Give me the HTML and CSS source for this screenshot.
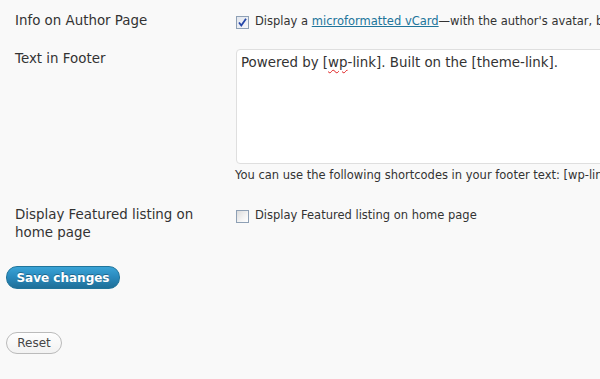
FILE: index.html
```html
<!DOCTYPE html>
<html>
<head>
<meta charset="utf-8">
<link rel="stylesheet" href="styles.css">
</head>
<body>
<form class="settings">
  <div class="row row-author">
    <div class="label">Info on Author Page</div>
    <div class="field">
      <label class="check"><span class="box checked"><svg viewBox="0 0 13 13" width="13" height="13"><path d="M3 6.5 L5.3 9.5 L10 2.8" fill="none" stroke="#2446a8" stroke-width="1.8"/></svg></span><span class="check-text">Display a <a href="#">microformatted vCard</a>—with the author's avatar, bio and other details—on the author page.</span></label>
    </div>
  </div>
  <div class="row row-footer">
    <div class="label">Text in Footer</div>
    <div class="field">
      <div class="textarea">Powered by [<span class="spell">wp</span>-link]. Built on the [theme-link].</div>
      <p class="desc">You can use the following shortcodes in your footer text: [wp-link] [theme-link] [loginout-link] [blog-title] [blog-link] [the-year]</p>
    </div>
  </div>
  <div class="row row-featured">
    <div class="label">Display Featured listing on home page</div>
    <div class="field">
      <label class="check"><span class="box"></span><span class="check-text">Display Featured listing on home page</span></label>
    </div>
  </div>
  <div class="actions">
    <button type="button" class="btn-primary">Save changes</button>
  </div>
  <div class="reset-area">
    <button type="button" class="btn-secondary">Reset</button>
  </div>
</form>
</body>
</html>
```
FILE: styles.css
```css
html, body {
  margin: 0;
  padding: 0;
  background: #f9f9f9;
  overflow: hidden;
}
body {
  font-family: "DejaVu Sans", Verdana, sans-serif;
  color: #333;
  width: 600px;
  height: 379px;
}
.settings {
  width: 900px;
}
.row {
  display: grid;
  grid-template-columns: 235px 1fr;
}
.label {
  padding-left: 15px;
  font-size: 13.4px;
  line-height: 18px;
  width: 190px;
}
.row-author {
  padding-top: 12px;
}
.row-footer {
  padding-top: 19px;
}
.row-footer .label {
  padding-top: 1px;
}
.row-featured {
  padding-top: 23px;
}
.check {
  display: flex;
  align-items: flex-start;
  font-size: 11.5px;
  line-height: 18px;
  white-space: nowrap;
}
.box {
  box-sizing: border-box;
  width: 13px;
  height: 13px;
  margin: 4px 6px 0 1px;
  border: 1px solid #8ea0b5;
  background: linear-gradient(135deg, #dcdcdc 0%, #f4f4f4 60%, #ffffff 100%);
  position: relative;
  flex: none;
}
.box svg {
  position: absolute;
  left: -1px;
  top: -1px;
}
.box.checked {
  background: linear-gradient(135deg, #e2e6ee 0%, #f5f6f8 100%);
}
.check-text a {
  color: #21759b;
  text-decoration: underline;
}
.textarea {
  box-sizing: border-box;
  margin-left: 1px;
  width: 500px;
  height: 115px;
  background: #fff;
  border: 1px solid #dfdfdf;
  border-radius: 4px;
  padding: 4px 4px;
  font-size: 13.4px;
  line-height: 18px;
  white-space: nowrap;
}
.spell {
  text-decoration: underline wavy #e02020;
  text-decoration-thickness: 1px;
  text-underline-offset: 2px;
}
.desc {
  margin: 3px 0 0;
  font-size: 11.5px;
  line-height: 16px;
  white-space: nowrap;
}
.actions {
  padding: 24px 0 0 6px;
}
.btn-primary {
  box-sizing: border-box;
  width: 114px;
  height: 23px;
  border: 1px solid #21759b;
  border-radius: 11px;
  background: linear-gradient(to bottom, #3aa3d6 0%, #2a8bbf 45%, #1f6f98 100%);
  color: #fff;
  font-family: "DejaVu Sans", Verdana, sans-serif;
  font-weight: bold;
  font-size: 12px;
  padding: 0;
  text-shadow: 0 -1px 0 rgba(0,0,0,0.3);
}
.reset-area {
  padding: 43px 0 0 6px;
}
.btn-secondary {
  box-sizing: border-box;
  width: 56px;
  height: 22px;
  border: 1px solid #bbb;
  border-radius: 11px;
  background: linear-gradient(to bottom, #fefefe 0%, #f2f2f2 100%);
  color: #464646;
  font-family: "DejaVu Sans", Verdana, sans-serif;
  font-size: 12px;
  padding: 0;
}
```
